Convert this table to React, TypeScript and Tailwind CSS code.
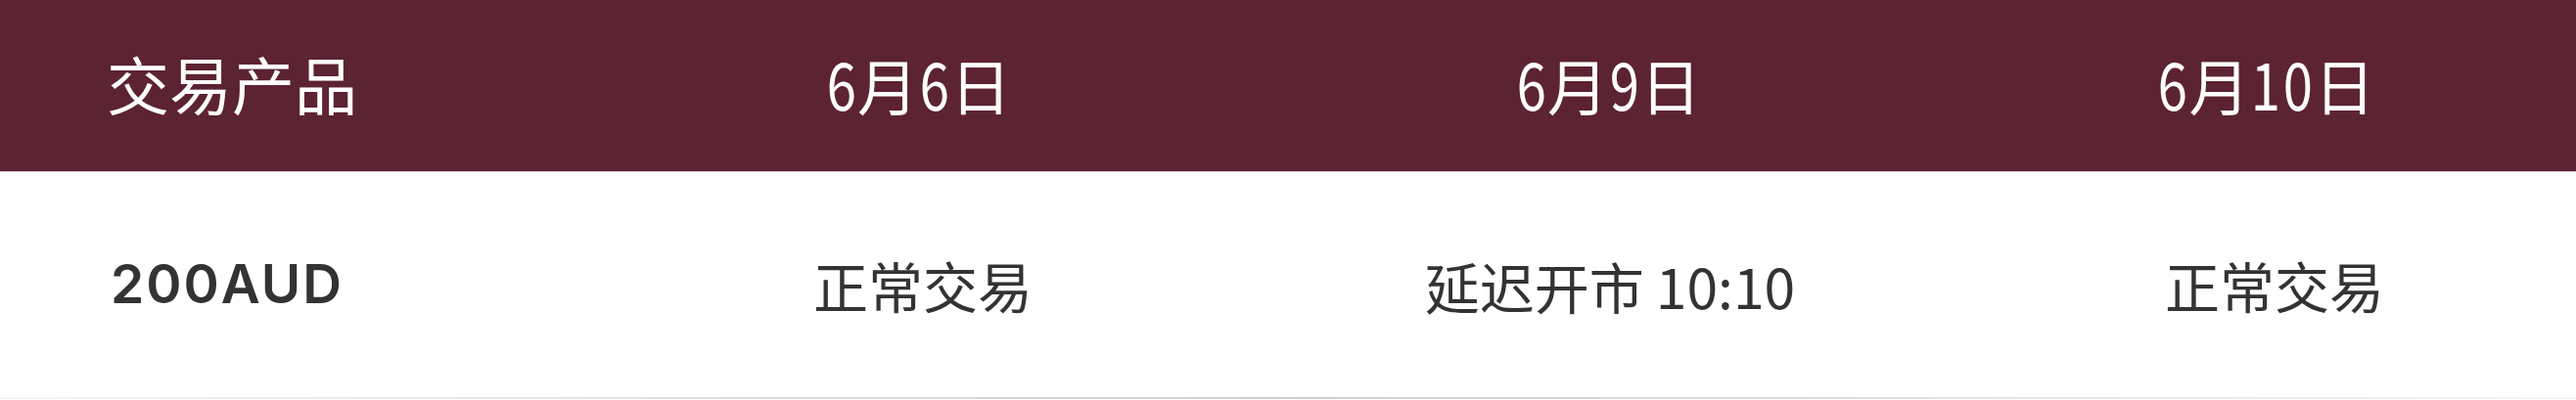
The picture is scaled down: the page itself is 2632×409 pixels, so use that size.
import React from "react";

const cols = "grid grid-cols-[588px_700px_710px_634px]";

function HeadDate({ parts }: { parts: string[] }) {
  return (
    <span className="inline-flex items-baseline leading-none">
      {parts.map((p, i) =>
        /[0-9]/.test(p) ? (
          <span key={i} className="inline-flex">
            {p.split("").map((d, j) => (
              <span key={j} className="inline-flex justify-center w-[33px]">
                <span className="inline-block text-[68px] leading-none scale-x-[0.8]">{d}</span>
              </span>
            ))}
          </span>
        ) : (
          <span key={i} className="text-[62px] leading-none">{p}</span>
        )
      )}
    </span>
  );
}

export default function App() {
  const font = { fontFamily: '"Noto Sans CJK SC", "Noto Sans", sans-serif' };
  return (
    <div className="w-[2632px] h-[409px] bg-white" style={font}>
      <div className={`${cols} h-[176px] bg-[#5c2333] text-white leading-none border-b border-[#d9c9cd]`}>
        <div className="flex items-center pl-[109px] pb-[8px]">
          <span className="text-[64px] leading-none">交易产品</span>
        </div>
        <div className="flex items-center justify-center pb-[8px]">
          <HeadDate parts={["6", "月", "6", "日"]} />
        </div>
        <div className="flex items-center justify-center pb-[8px]">
          <HeadDate parts={["6", "月", "9", "日"]} />
        </div>
        <div className="flex items-center justify-center pb-[8px]">
          <HeadDate parts={["6", "月", "10", "日"]} />
        </div>
      </div>
      <div className={`${cols} h-[230px] text-[#333333] text-[56px] leading-none`}>
        <div className="flex items-center pl-[113px] pb-[2px]">
          <span
            className="font-semibold text-[55px] tracking-[2px] leading-none"
            style={{ fontFamily: 'Inter, "Noto Sans", sans-serif' }}
          >
            200AUD
          </span>
        </div>
        <div className="flex items-center justify-center pl-[10px]">正常交易</div>
        <div className="flex items-center justify-center pl-[4px]">
          <span className="inline-flex items-baseline leading-none">
            <span>延迟开市</span>
            <span className="text-[57px] ml-[12px]">10:10</span>
          </span>
        </div>
        <div className="flex items-center justify-center pl-[18px]">正常交易</div>
      </div>
      <div className="h-[2px] bg-gradient-to-r from-[#f4f4f4] via-[#cfcfcf] to-[#f4f4f4]" />
    </div>
  );
}
